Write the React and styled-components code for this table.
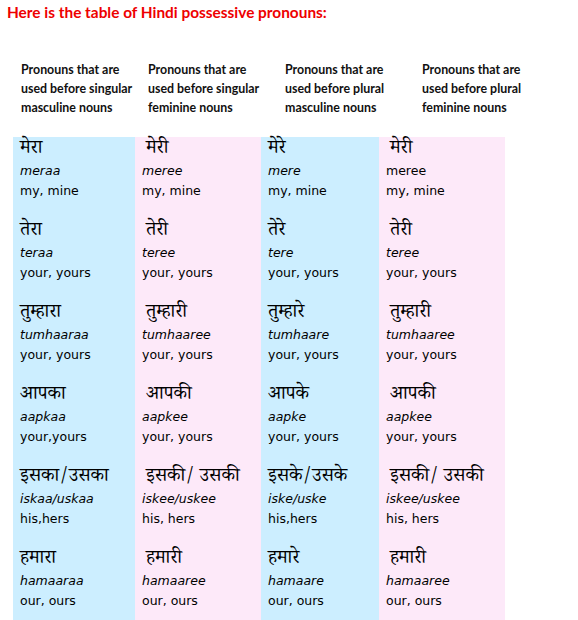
import React from "react"
import styled, { createGlobalStyle } from "styled-components"

const GlobalStyle = createGlobalStyle`
  body {
    margin: 0;
    background: #fff;
    font-family: "DejaVu Sans", sans-serif;
    color: #111;
  }
`

const Page = styled.div`
  width: 578px;
  height: 620px;
  overflow: hidden;
`

const Title = styled.h1`
  margin: 0;
  padding: 3px 0 0 7px;
  height: 21px;
  box-sizing: border-box;
  font-family: Lato, "Liberation Sans", sans-serif;
  font-size: 15.4px;
  line-height: 18px;
  font-weight: 700;
  color: #ee0000;
`

const HeaderRow = styled.div`
  display: grid;
  grid-template-columns: 127px 137px 137px 137px;
  padding: 39px 0 0 21px;
  height: 116px;
  box-sizing: border-box;
`

const HeaderCell = styled.div`
  font-family: Lato, "Liberation Sans", sans-serif;
  font-size: 12.4px;
  font-weight: 700;
  line-height: 19px;
  color: #111;
  white-space: pre-line;
`

const Table = styled.div`
  display: grid;
  grid-template-columns: 122px 126px 118px 126px;
  margin-left: 13px;
`

const Cell = styled.div`
  background: ${p => (p.$tone === "pink" ? "#fde9f9" : "#cceeff")};
  padding: 2px 0 0 7px;
  height: 82px;
  box-sizing: border-box;
`

const Hindi = styled.div`
  font-family: "Noto Serif Devanagari", "Noto Sans Devanagari", "Lohit Devanagari", serif;
  font-size: 19px;
  line-height: 22px;
  height: 22px;
  padding-left: ${p => (p.$indent ? "4px" : "0")};
  white-space: nowrap;
  color: #000;
`

const Translit = styled.div`
  font-size: 12.5px;
  line-height: 20px;
  font-style: ${p => (p.$plain ? "normal" : "italic")};
  white-space: nowrap;
  color: #000;
`

const English = styled.div`
  font-size: 12.5px;
  line-height: 19px;
  white-space: nowrap;
  color: #000;
`

const headers = [
  "Pronouns that are\nused before singular\nmasculine nouns",
  "Pronouns that are\nused before singular\nfeminine nouns",
  "Pronouns that are\nused before plural\nmasculine nouns",
  "Pronouns that are\nused before plural\nfeminine nouns",
]

const rows = [
  [
    ["मेरा", "meraa", "my, mine"],
    ["मेरी", "meree", "my, mine"],
    ["मेरे", "mere", "my, mine"],
    ["मेरी", "meree", "my, mine", true],
  ],
  [
    ["तेरा", "teraa", "your, yours"],
    ["तेरी", "teree", "your, yours"],
    ["तेरे", "tere", "your, yours"],
    ["तेरी", "teree", "your, yours"],
  ],
  [
    ["तुम्हारा", "tumhaaraa", "your, yours"],
    ["तुम्हारी", "tumhaaree", "your, yours"],
    ["तुम्हारे", "tumhaare", "your, yours"],
    ["तुम्हारी", "tumhaaree", "your, yours"],
  ],
  [
    ["आपका", "aapkaa", "your,yours"],
    ["आपकी", "aapkee", "your, yours"],
    ["आपके", "aapke", "your, yours"],
    ["आपकी", "aapkee", "your, yours"],
  ],
  [
    ["इसका/उसका", "iskaa/uskaa", "his,hers"],
    ["इसकी/ उसकी", "iskee/uskee", "his, hers"],
    ["इसके/उसके", "iske/uske", "his,hers"],
    ["इसकी/ उसकी", "iskee/uskee", "his, hers"],
  ],
  [
    ["हमारा", "hamaaraa", "our, ours"],
    ["हमारी", "hamaaree", "our, ours"],
    ["हमारे", "hamaare", "our, ours"],
    ["हमारी", "hamaaree", "our, ours"],
  ],
]

const App = () => {
  return (
    <Page>
      <GlobalStyle />
      <Title>Here is the table of Hindi possessive pronouns:</Title>
      <HeaderRow>
        {headers.map((h, i) => (
          <HeaderCell key={i}>{h}</HeaderCell>
        ))}
      </HeaderRow>
      <Table>
        {rows.map((row, r) =>
          row.map(([hi, tr, en, plain], c) => (
            <Cell key={r + "-" + c} $tone={c % 2 ? "pink" : "blue"}>
              <Hindi $indent={c % 2 === 1}>{hi}</Hindi>
              <Translit $plain={plain}>{tr}</Translit>
              <English>{en}</English>
            </Cell>
          ))
        )}
      </Table>
    </Page>
  )
}

export default App
